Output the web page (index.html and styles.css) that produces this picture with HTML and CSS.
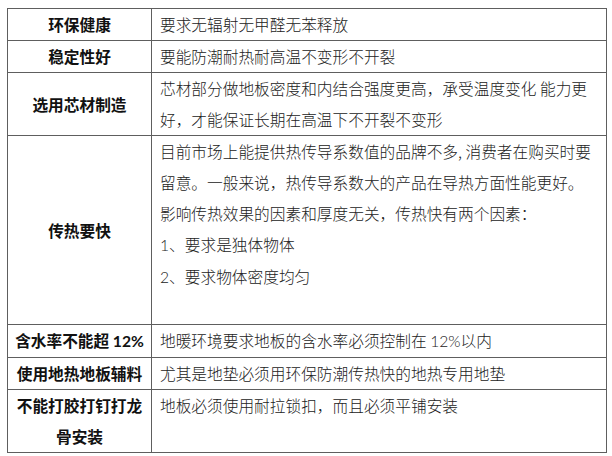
FILE: index.html
```html
<!DOCTYPE html>
<html lang="zh-CN">
<head>
<meta charset="utf-8">
<title>地暖地板选购要点</title>
<link rel="stylesheet" href="styles.css">
</head>
<body>
<table class="spec">
  <colgroup>
    <col class="col-key">
    <col class="col-val">
  </colgroup>
  <tbody>
    <tr>
      <th>环保健康</th>
      <td>要求无辐射无甲醛无苯释放</td>
    </tr>
    <tr>
      <th>稳定性好</th>
      <td>要能防潮耐热耐高温不变形不开裂</td>
    </tr>
    <tr>
      <th>选用芯材制造</th>
      <td>芯材部分做地板密度和内结合强度更高，承受温度变化 能力更好，才能保证长期在高温下不开裂不变形</td>
    </tr>
    <tr>
      <th>传热要快</th>
      <td>
        <p class="para">目前市场上能提供热传导系数值的品牌不多, 消费者在购买时要留意。一般来说，热传导系数大的产品在导热方面性能更好。</p>
        <p class="para">影响传热效果的因素和厚度无关，传热快有两个因素：</p>
        <p class="para"><span class="num">1</span>、要求是独体物体</p>
        <p class="para"><span class="num">2</span>、要求物体密度均匀</p>
        <p class="para empty"></p>
      </td>
    </tr>
    <tr>
      <th>含水率不能超 <span class="num">12%</span></th>
      <td>地暖环境要求地板的含水率必须控制在 <span class="num">12%</span>以内</td>
    </tr>
    <tr>
      <th>使用地热地板辅料</th>
      <td>尤其是地垫必须用环保防潮传热快的地热专用地垫</td>
    </tr>
    <tr>
      <th>不能打胶打钉打龙骨安装</th>
      <td>地板必须使用耐拉锁扣，而且必须平铺安装</td>
    </tr>
  </tbody>
</table>
</body>
</html>
```
FILE: styles.css
```css
html, body {
  background: #ffffff;
}
body {
  margin: 8px 0 0 7px;
  font-family: "Noto Sans CJK SC", "Noto Sans", sans-serif;
  font-size: 15.7px;
  line-height: 31px;
  color: #1a1a1a;
}
.spec {
  border-collapse: collapse;
  table-layout: fixed;
  width: 599px;
}
.col-key {
  width: 144px;
}
.col-val {
  width: 455px;
}
.spec th,
.spec td {
  border: 1px solid #5e5e5e;
  padding: 0;
}
.spec th {
  font-weight: 700;
  color: #111111;
  text-align: center;
  vertical-align: middle;
  padding: 0 7px;
}
.spec td {
  font-weight: 300;
  color: #222222;
  text-align: left;
  vertical-align: top;
  padding: 0 3px 0 8px;
}
.para {
  margin: 0;
}
.para.empty {
  height: 31px;
}
.num {
  font-family: "Lato", "Open Sans", sans-serif;
}
```
